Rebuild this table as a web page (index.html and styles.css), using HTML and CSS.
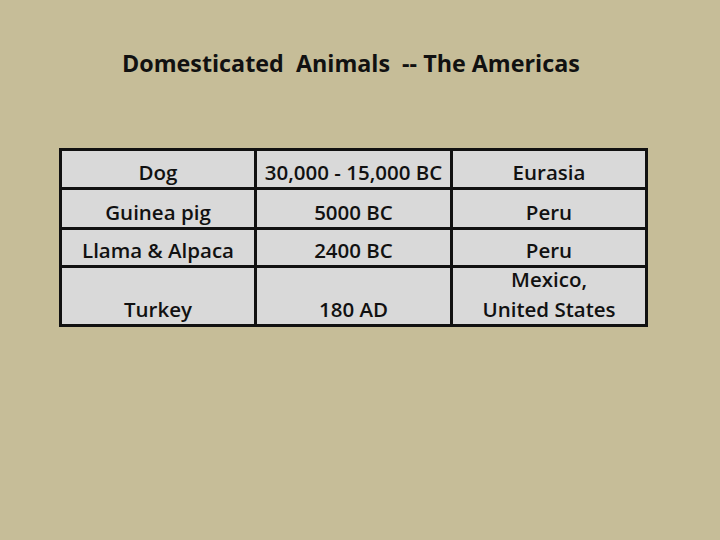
FILE: index.html
```html
<!DOCTYPE html>
<html>
<head>
<meta charset="utf-8">
<link rel="stylesheet" href="styles.css">
</head>
<body>
<div class="slide">
  <h1 class="title">Domesticated  Animals  -- The Americas</h1>
  <div class="grid">
    <div class="cell">Dog</div>
    <div class="cell">30,000 - 15,000 BC</div>
    <div class="cell">Eurasia</div>
    <div class="cell">Guinea pig</div>
    <div class="cell">5000 BC</div>
    <div class="cell">Peru</div>
    <div class="cell">Llama &amp; Alpaca</div>
    <div class="cell">2400 BC</div>
    <div class="cell">Peru</div>
    <div class="cell">Turkey</div>
    <div class="cell">180 AD</div>
    <div class="cell">Mexico,<br>United States</div>
  </div>
</div>
</body>
</html>
```
FILE: styles.css
```css
html, body {
  margin: 0;
  padding: 0;
}
body {
  background: #c6bd98;
  width: 720px;
  height: 540px;
  overflow: hidden;
}
.slide {
  padding-top: 47px;
  font-family: "Open Sans", Lato, sans-serif;
  color: #111;
}
.title {
  margin: 0 0 0 122px;
  font-size: 23.3px;
  font-weight: 700;
  line-height: 32px;
  white-space: pre;
}
.grid {
  margin: 69px 0 0 59px;
  width: 583px;
  padding: 3px;
  background: #111;
  display: grid;
  grid-template-columns: 192px 193px 192px;
  grid-template-rows: 36px 37px 35px 56px;
  gap: 3px;
}
.cell {
  background: #d9d9d9;
  display: flex;
  flex-direction: column;
  justify-content: flex-end;
  align-items: center;
  text-align: center;
  font-size: 20.5px;
  font-weight: 560;
  line-height: 30px;
}
```
